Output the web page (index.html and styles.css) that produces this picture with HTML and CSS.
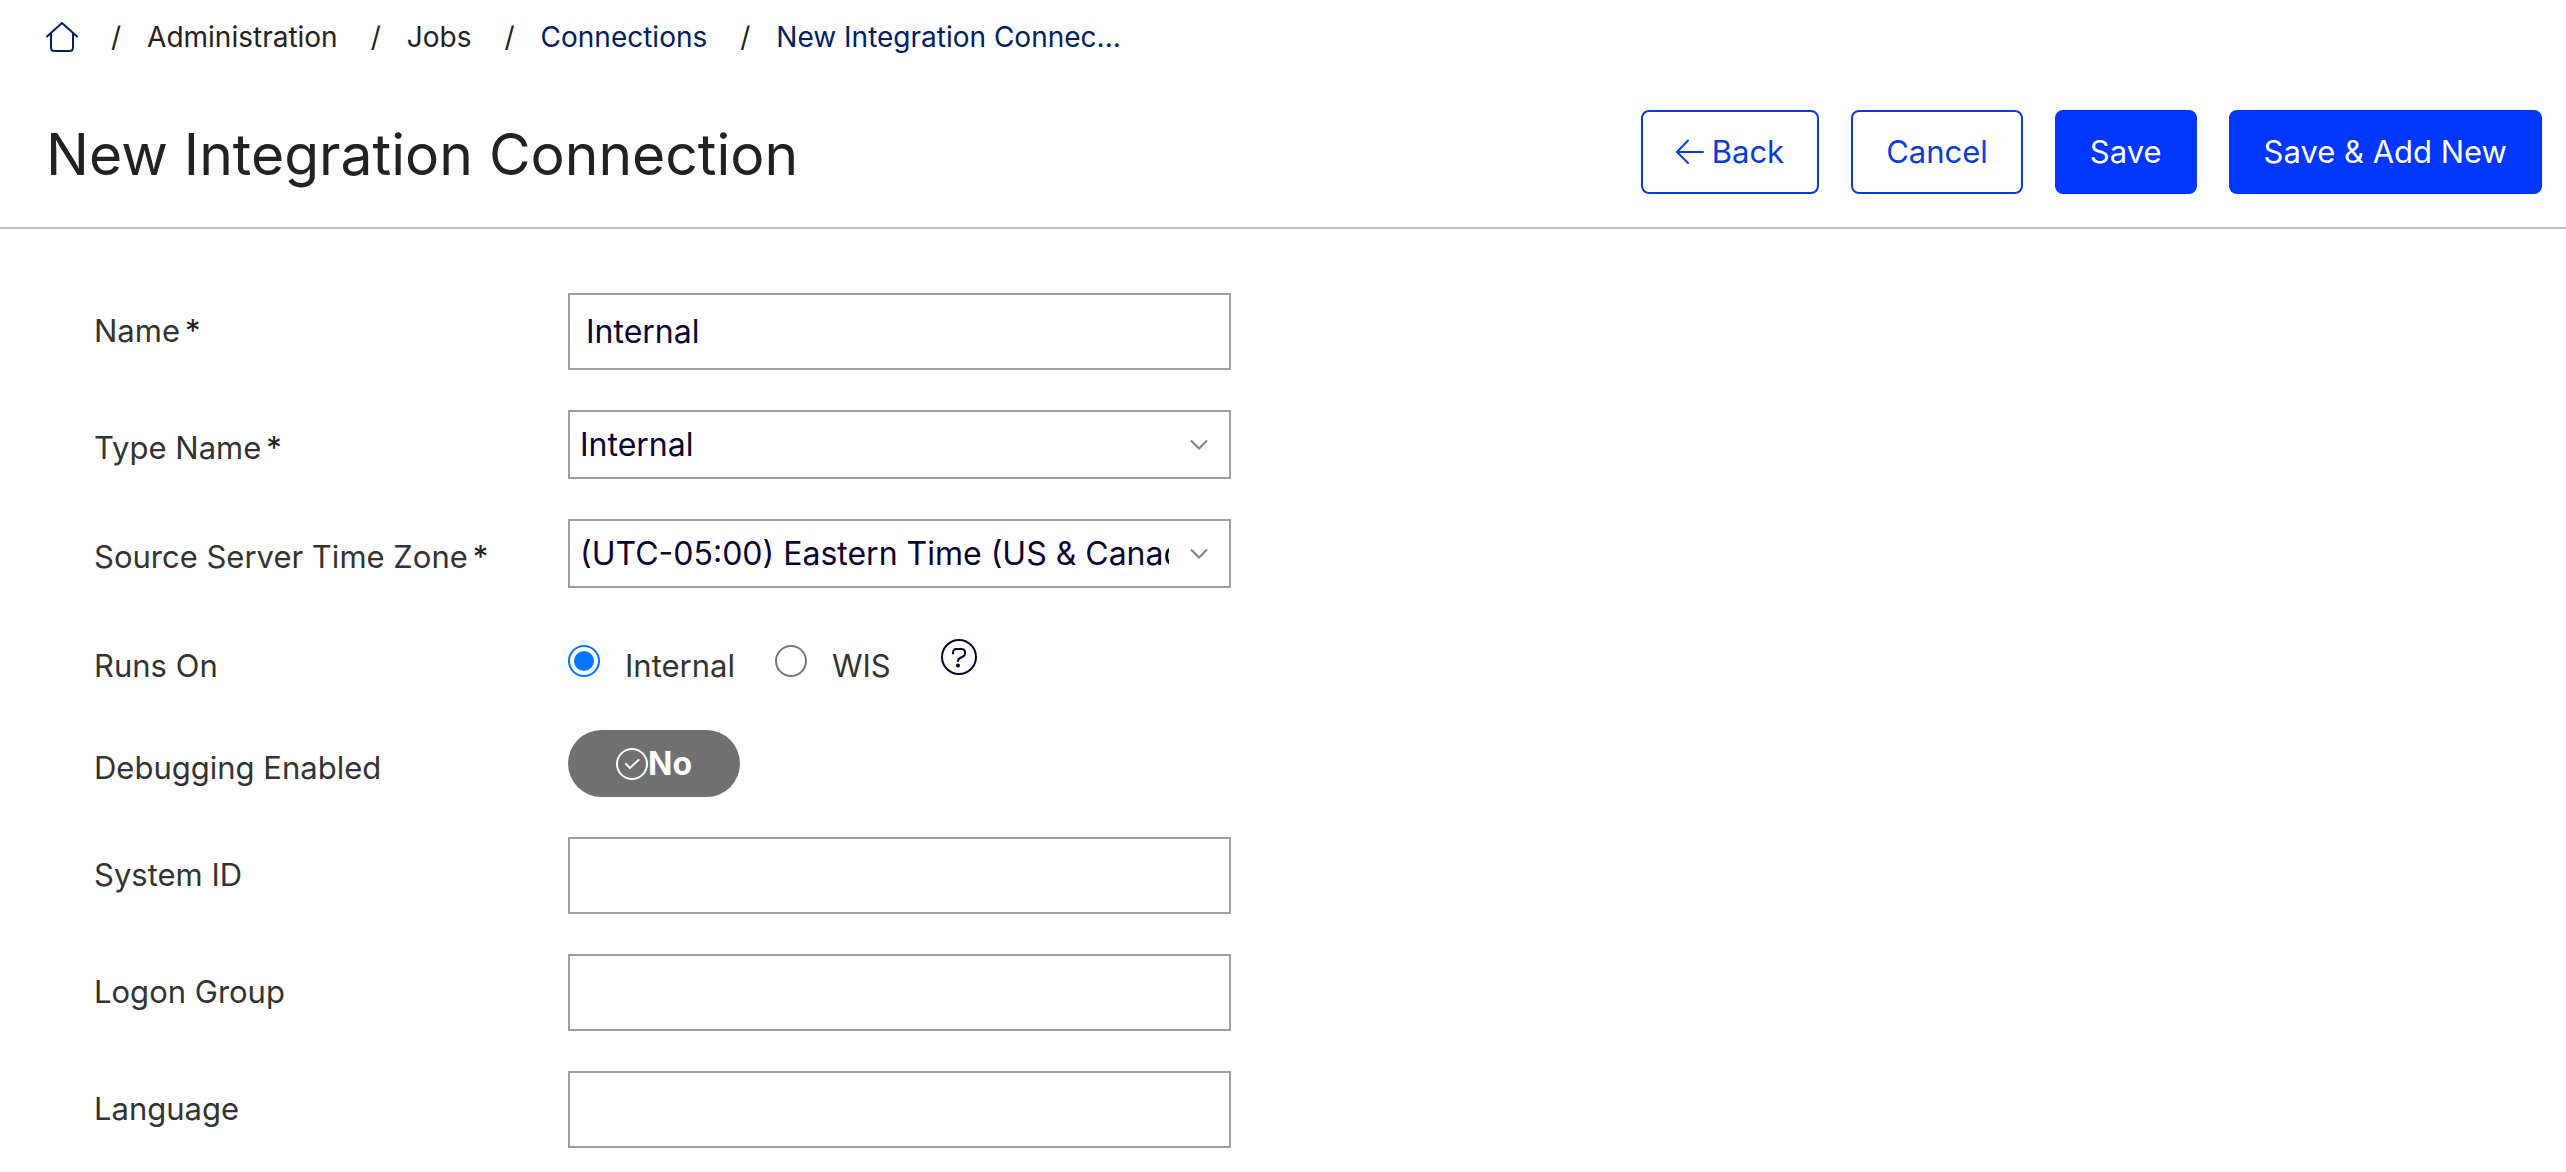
FILE: index.html
```html
<!DOCTYPE html>
<html lang="en">
<head>
    <meta charset="utf-8"/>
    <meta name="viewport" content="width=device-width, initial-scale=1"/>
    <title>New Integration Connection</title>
    <link rel="stylesheet" href="styles.css">
</head>
<body>
    <nav class="breadcrumb" aria-label="Breadcrumb">
        <a class="home" href="#" aria-label="Home">
            <svg width="32" height="32" viewBox="0 0 32 32" fill="none" stroke="currentColor" stroke-width="2" stroke-linecap="round" stroke-linejoin="round">
                <path d="M1 15.5 L16 2 L31 15.5"/>
                <path d="M5 12.5 V26.5 Q5 30 8.500 30 H23.500 Q27 30 27 26.500 V12.500"/>
            </svg>
        </a>
        <span class="slash">/</span>
        <span>Administration</span>
        <span class="slash">/</span>
        <span>Jobs</span>
        <span class="slash">/</span>
        <a href="#">Connections</a>
        <span class="slash">/</span>
        <a href="#">New Integration Connec...</a>
    </nav>

    <header class="page-header">
        <h1>New Integration Connection</h1>
        <div class="actions">
            <button class="btn" type="button">
                <svg width="28" height="26" viewBox="0 0 28 26" fill="none" stroke="currentColor" stroke-width="2" stroke-linecap="round" stroke-linejoin="round">
                    <path d="M27 13 H1 M12 1.500 L1 13 L12 24"/>
                </svg>
                Back
            </button>
            <button class="btn" type="button">Cancel</button>
            <button class="btn primary" type="submit" form="connection">Save</button>
            <button class="btn primary" type="submit" form="connection">Save &amp; Add New</button>
        </div>
    </header>

    <form id="connection" class="form">
        <div class="row">
            <label class="caption" for="name">Name<span class="required">*</span></label>
            <input class="text" id="name" type="text" value="Internal"/>
        </div>
        <div class="row">
            <label class="caption" for="type">Type Name<span class="required">*</span></label>
            <div class="dropdown">
                <select id="type">
                    <option>Internal</option>
                </select>
                <svg class="chevron" width="18" height="12" viewBox="0 0 18 12" fill="none" stroke="currentColor" stroke-width="2">
                    <path d="M1 1.500 L9 9.500 L17 1.500"/>
                </svg>
            </div>
        </div>
        <div class="row">
            <label class="caption" for="zone">Source Server Time Zone<span class="required">*</span></label>
            <div class="dropdown">
                <select id="zone">
                    <option>(UTC-05:00) Eastern Time (US &amp; Canada)</option>
                </select>
                <svg class="chevron" width="18" height="12" viewBox="0 0 18 12" fill="none" stroke="currentColor" stroke-width="2">
                    <path d="M1 1.500 L9 9.500 L17 1.500"/>
                </svg>
            </div>
        </div>
        <div class="row">
            <span class="caption" id="runs-on">Runs On</span>
            <div class="radios" role="radiogroup" aria-labelledby="runs-on">
                <input id="runs-internal" type="radio" name="runs" checked/>
                <label for="runs-internal">Internal</label>
                <input id="runs-wis" type="radio" name="runs"/>
                <label for="runs-wis">WIS</label>
                <button class="help" type="button" aria-label="Help">
                    <svg width="36" height="36" viewBox="0 0 36 36" fill="none" stroke="currentColor" stroke-width="2" stroke-linecap="round" stroke-linejoin="round">
                        <circle cx="18" cy="18" r="17"/>
                        <path d="M12 14.500 V13.500 Q12 10 15.500 10 H20.500 Q24 10 24 13.500 V14.500 Q24 16.500 22 17.500 L19 19 Q17 20 17 22"/>
                        <circle cx="17" cy="26.500" r="1" fill="currentColor"/>
                    </svg>
                </button>
            </div>
        </div>
        <div class="row">
            <label class="caption" for="debugging">Debugging Enabled</label>
            <button class="toggle" id="debugging" type="button" aria-pressed="false">
                <svg width="32" height="32" viewBox="0 0 32 32" fill="none" stroke="currentColor" stroke-width="2" stroke-linecap="round" stroke-linejoin="round">
                    <circle cx="16" cy="16" r="15"/>
                    <path d="M10 16 L14 20 L22.500 12"/>
                </svg>
                <span>No</span>
            </button>
        </div>
        <div class="row">
            <label class="caption" for="system">System ID</label>
            <input class="text" id="system" type="text"/>
        </div>
        <div class="row">
            <label class="caption" for="logon">Logon Group</label>
            <input class="text" id="logon" type="text"/>
        </div>
        <div class="row">
            <label class="caption" for="language">Language</label>
            <input class="text" id="language" type="text"/>
        </div>
    </form>
</body>
</html>
```
FILE: styles.css
```css
* {
    box-sizing: border-box;
}
body {
    margin: 0;
    background: #fff;
    color: #222;
    font: 32px/40px Inter, "Liberation Sans", sans-serif;
}
button, input, select {
    font: inherit;
    margin: 0;
}
svg {
    display: block;
    flex: none;
}

/* Breadcrumb */
.breadcrumb {
    display: flex;
    align-items: center;
    padding: 17px 46px;
    font-size: 28px;
    white-space: nowrap;
}
.breadcrumb a {
    color: #00205f;
    text-decoration: none;
}
.slash {
    margin: 0 26px 0 33px;
}

/* Title and actions */
.page-header {
    display: flex;
    justify-content: space-between;
    align-items: flex-start;
    padding: 36px 24px 27px 46px;
    border-bottom: 2px solid #c4c4c4;
}
h1 {
    margin: 0;
    font-size: 57px;
    line-height: 90px;
    font-weight: 400;
}
.actions {
    display: flex;
    gap: 32px;
}
.btn {
    display: flex;
    align-items: center;
    gap: 8px;
    padding: 20px 33px;
    border: 2px solid #0a3cd6;
    border-radius: 8px;
    background: #fff;
    color: #0a3cd6;
    font-size: 31px;
    white-space: nowrap;
}
.primary {
    border-color: #0037ff;
    background: #0037ff;
    color: #fff;
}

/* Form */
.form {
    display: grid;
    gap: 40px;
    padding: 64px 94px 24px;
}
.row {
    display: grid;
    grid-template-columns: 474px minmax(0, 663px);
    align-items: start;
}
.caption, .radios label {
    padding-top: 18px;
    color: #333;
    font-size: 31px;
}
.required {
    margin-left: 5px;
    color: #222;
}
.text, select {
    width: 100%;
    border: 2px solid #9e9e9e;
    border-radius: 0;
    background: #fff;
    color: #0a0033;
}
.text {
    height: 77px;
    padding: 0 16px;
}
.dropdown {
    display: grid;
    align-items: center;
}
.dropdown > * {
    grid-area: 1 / 1;
}
select {
    height: 69px;
    padding: 0 60px 0 10px;
    appearance: none;
}
.chevron {
    justify-self: end;
    margin-right: 23px;
    color: #808080;
    pointer-events: none;
}
.radios {
    display: flex;
    align-items: flex-start;
    height: 62px;
}
.radios label {
    padding-left: 25px;
    padding-right: 40px;
}
.radios input {
    display: grid;
    place-items: center;
    width: 32px;
    height: 32px;
    margin-top: 17px;
    border: 2px solid #767676;
    border-radius: 50%;
    appearance: none;
}
.radios input:checked {
    border-color: #0075ff;
}
.radios input:checked::before {
    content: "";
    width: 20px;
    height: 20px;
    border-radius: 50%;
    background: #0075ff;
}
.help {
    margin: 11px 0 0 10px;
    padding: 0;
    border: 0;
    background: none;
    color: #0a0033;
}
.toggle {
    display: flex;
    align-items: center;
    justify-content: center;
    width: 172px;
    height: 67px;
    border: 0;
    border-radius: 34px;
    background: #707070;
    color: #fff;
    font-weight: 700;
}
```
